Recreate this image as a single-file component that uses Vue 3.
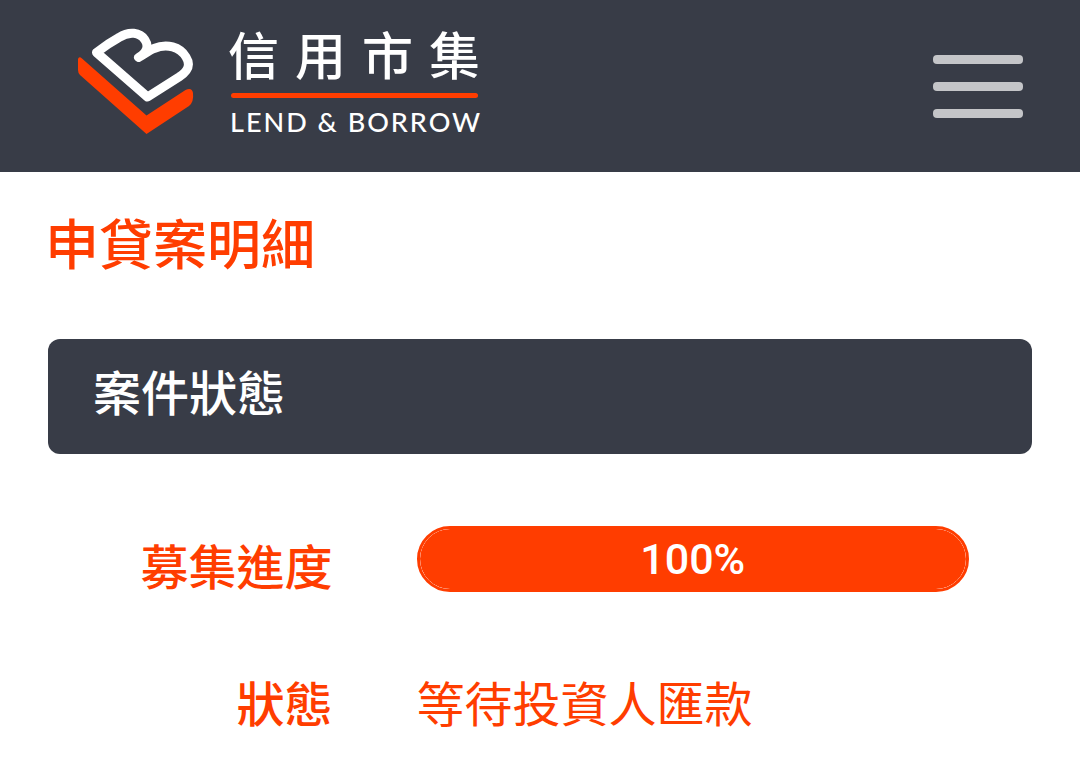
<script setup>
import { ref } from 'vue'

const menuOpen = ref(false)
const progress = 100
</script>

<template>
  <header class="navbar">
    <a class="brand" href="#">
      <svg class="mark" viewBox="0 0 120 110" aria-hidden="true">
        <path
          class="heart"
          d="M20.500 26.500 Q32 17.500 43 11.500 C53 5 64 6 69 14 C73 20 71 27 62.500 31.500 C70 27 74 24 78 22.500 C91 17 104 21 110 31 C115 39 112 45 103 51 L71.500 71 Z"
        />
        <path
          class="tick"
          d="M2 33 Q3 30 6 32.500 L70.500 89.500 L109.500 64 Q116 61 117 67 Q118 76 113 80 L70.500 108 L4 49 Q2 47 2 44 Z"
        />
      </svg>
      <span class="wordmark">
        <span class="name">信用市集</span>
        <span class="rule"></span>
        <span class="latin">LEND &amp; BORROW</span>
      </span>
    </a>
    <button
      class="toggle"
      type="button"
      aria-label="選單"
      :aria-expanded="menuOpen"
      @click="menuOpen = !menuOpen"
    >
      <span class="line"></span>
      <span class="line"></span>
      <span class="line"></span>
    </button>
  </header>
  <main class="content">
    <h1 class="title">申貸案明細</h1>
    <section class="card">
      <h2 class="section">案件狀態</h2>
      <dl class="details">
        <dt id="progress-label">募集進度</dt>
        <dd>
          <div
            class="progress"
            role="progressbar"
            aria-labelledby="progress-label"
            aria-valuemin="0"
            aria-valuemax="100"
            :aria-valuenow="progress"
          >
            <div class="bar" :style="{ width: progress + '%' }">{{ progress }}%</div>
          </div>
        </dd>
        <dt>狀態</dt>
        <dd>等待投資人匯款</dd>
      </dl>
    </section>
  </main>
</template>

<style>
body {
  margin: 0;
  background: #fff;
  font-family: Roboto, "Noto Sans CJK TC", sans-serif;
}
</style>

<style scoped>
.navbar {
  display: flex;
  justify-content: space-between;
  align-items: center;
  box-sizing: border-box;
  min-height: 172px;
  padding: 0 57px 0 76px;
  background: #383c47;
}
.brand {
  display: flex;
  align-items: center;
  gap: 32px;
  padding-bottom: 10px;
  color: #fff;
  text-decoration: none;
}
.mark {
  width: 120px;
  height: 110px;
}
.heart {
  fill: none;
  stroke: #fff;
  stroke-width: 9;
  stroke-linejoin: round;
  stroke-linecap: round;
}
.tick {
  fill: #ff3d00;
}
.wordmark {
  display: flex;
  flex-direction: column;
}
.name {
  font-family: "Noto Sans CJK TC", sans-serif;
  font-size: 51px;
  font-weight: 500;
  line-height: 60px;
  letter-spacing: 16px;
  white-space: nowrap;
}
.rule {
  width: 247px;
  height: 5px;
  margin: 10px 0 0 3px;
  border-radius: 3px;
  background: #ff3d00;
}
.latin {
  padding: 6px 0 0 2px;
  font-family: Lato, sans-serif;
  font-size: 27px;
  font-weight: 500;
  line-height: 36px;
  letter-spacing: 2px;
  white-space: nowrap;
}
.toggle {
  display: flex;
  flex-direction: column;
  gap: 18px;
  padding: 0;
  border: 0;
  background: none;
}
.line {
  width: 90px;
  height: 9px;
  border-radius: 4px;
  background: #c4c5c8;
}
.content {
  padding: 35px 45px;
  color: #ff3d00;
}
.title {
  margin: 0 0 52px;
  font-size: 54px;
  font-weight: 500;
  line-height: 80px;
}
.card {
  padding: 0 3px;
}
.section {
  margin: 0 0 72px;
  padding: 20px 45px 23px;
  border-radius: 12px;
  background: #383c47;
  color: #fff;
  font-size: 48px;
  font-weight: 500;
  line-height: 72px;
}
.details {
  display: grid;
  grid-template-columns: 34fr 66fr;
  gap: 58px 84px;
  margin: 0;
  padding-right: 63px;
  font-size: 48px;
  line-height: 72px;
}
dt {
  padding-top: 7px;
  font-weight: 500;
  text-align: right;
}
dd {
  margin: 0;
}
dd:last-child {
  padding-top: 7px;
}
.progress {
  box-sizing: border-box;
  height: 66px;
  border: 3px solid #ff3d00;
  border-radius: 33px;
  background: #fff;
  overflow: hidden;
}
.bar {
  height: 60px;
  border-radius: 30px;
  background: #ff3d00;
  color: #fff;
  font-size: 43px;
  font-weight: 500;
  line-height: 60px;
  text-align: center;
}
</style>
